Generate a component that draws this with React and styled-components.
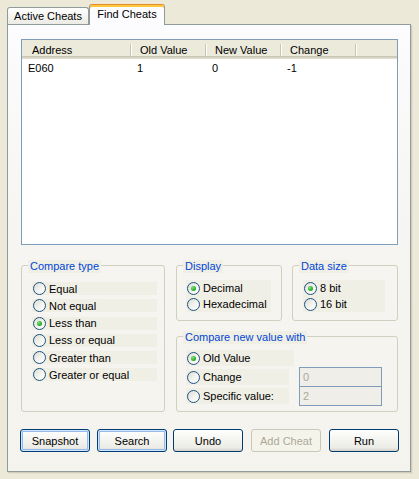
import { createGlobalStyle, styled, css } from "styled-components";

const GlobalStyle = createGlobalStyle`
  html, body {
    margin: 0;
    padding: 0;
    background: #ece9d8;
  }
  body {
    font-family: "Liberation Sans", Arial, sans-serif;
    font-size: 11px;
    color: #000000;
  }
`;

const Window = styled.div`
  width: 419px;
  height: 479px;
  box-sizing: border-box;
  padding: 4px 8px 0 7px;
  background: #ece9d8;
  overflow: hidden;
`;

const TabStrip = styled.div`
  display: flex;
  align-items: flex-end;
  height: 20px;
`;

const Tab = styled.div`
  box-sizing: border-box;
  display: flex;
  align-items: center;
  justify-content: center;
  border: 1px solid #919b9c;
  border-bottom: none;
  border-radius: 3px 3px 0 0;
  ${(p) =>
    p.$active
      ? css`
          width: 76px;
          height: 21px;
          margin-bottom: -1px;
          position: relative;
          z-index: 1;
          padding-bottom: 2px;
          border-top: 1px solid #e68b2c;
          box-shadow: inset 0 2px 0 #ffc73c;
          background: #fcfcfe;
        `
      : css`
          width: 82px;
          height: 17px;
          background: linear-gradient(#ffffff, #f3f3ef 60%, #ecebe5);
        `}
`;

const Panel = styled.div`
  box-sizing: border-box;
  width: 404px;
  height: 448px;
  border: 1px solid #919b9c;
  padding: 14px 0 0 13px;
  background: linear-gradient(#fcfcfe, #f6f5f1 45%, #f4f3ee);
  box-shadow: 1px 1px 0 #d0cebf, 2px 2px 0 #e3e0d0;
`;

const List = styled.div`
  box-sizing: border-box;
  width: 377px;
  height: 206px;
  border: 1px solid #7f9db9;
  background: #ffffff;
`;

const HeaderRow = styled.div`
  display: flex;
  align-items: flex-start;
  height: 19px;
  box-sizing: border-box;
  background: #ebeadb;
  box-shadow: inset 0 -1px 0 #e2decd, inset 0 -2px 0 #d6d2c2, inset 0 -3px 0 #cbc7b8;
`;

const HeaderCell = styled.div`
  box-sizing: border-box;
  width: ${(p) => p.$w}px;
  height: 12px;
  margin-top: 4px;
  line-height: 12px;
  padding-left: ${(p) => p.$pad || 9}px;
  border-right: 1px solid #c7c5b2;
  box-shadow: 1px 0 0 #ffffff;
`;

const DataRow = styled.div`
  display: flex;
  height: 17px;
  align-items: center;
`;

const DataCell = styled.div`
  box-sizing: border-box;
  width: ${(p) => p.$w}px;
  padding-left: 6px;
`;

const Groups = styled.div`
  display: grid;
  grid-template-columns: 144px 222px;
  column-gap: 11px;
  margin-top: 20px;
`;

const RightColumn = styled.div`
  display: flex;
  flex-direction: column;
  gap: 15px;
`;

const TopPair = styled.div`
  display: flex;
  gap: 10px;
`;

const GroupBox = styled.div`
  position: relative;
  box-sizing: border-box;
  width: ${(p) => p.$w}px;
  height: ${(p) => p.$h}px;
  border: 1px solid #d0d0bf;
  border-radius: 3px;
  padding: ${(p) => p.$pad};
`;

const Legend = styled.span`
  position: absolute;
  top: -6px;
  left: 6px;
  height: 13px;
  line-height: 13px;
  padding: 0 2px;
  color: #0046d5;
  background: #f0efe6;
`;

const RadioList = styled.div`
  display: flex;
  flex-direction: column;
  gap: ${(p) => p.$gap}px;
`;

const RadioRow = styled.div`
  box-sizing: border-box;
  display: flex;
  align-items: center;
  gap: 3px;
  width: ${(p) => p.$w}px;
  height: ${(p) => p.$h}px;
  padding-left: 1px;
  background: #f0efe6;
  white-space: nowrap;
`;

const RadioDot = styled.span`
  position: relative;
  flex: none;
  box-sizing: border-box;
  width: 13px;
  height: 13px;
  border-radius: 50%;
  border: 1px solid #1c5180;
  background: linear-gradient(135deg, #dcdcd4 0%, #f2f2ee 50%, #ffffff 100%);

  ${(p) =>
    p.$checked &&
    css`
      &::after {
        content: "";
        position: absolute;
        left: 3px;
        top: 3px;
        width: 5px;
        height: 5px;
        border-radius: 50%;
        background: radial-gradient(circle at 35% 35%, #7ee07a 0%, #2fb22b 55%, #1b8d18 100%);
      }
    `}
`;

const CompareGrid = styled.div`
  display: grid;
  grid-template-columns: 103px 83px;
  grid-auto-rows: 16px;
  column-gap: 10px;
  row-gap: 3px;
`;

const ValueInput = styled.div`
  box-sizing: border-box;
  height: 20px;
  margin-top: -2px;
  border: 1px solid #7f9db9;
  background: #efeee8;
  color: #aca899;
  padding-left: 3px;
  line-height: 18px;
`;

const ButtonRow = styled.div`
  display: flex;
  margin-top: 17px;
  margin-left: -1px;
`;

const Button = styled.button`
  box-sizing: border-box;
  width: 70px;
  height: 23px;
  margin-left: ${(p) => p.$gap || 0}px;
  padding: 0;
  font-family: inherit;
  font-size: 11px;
  font-weight: normal;
  color: #000000;
  border: 1px solid #003c74;
  border-radius: 3px;
  background: linear-gradient(#ffffff 0%, #f3f3ef 50%, #ecebe6 85%, #d6d0c5 100%);
  ${(p) =>
    p.$focus &&
    css`
      box-shadow: inset 0 0 0 1px #cee7ff, inset 0 0 0 2px #98b8ea;
    `}
  ${(p) =>
    p.disabled &&
    css`
      color: #aca899;
      border-color: #c9c7ba;
      background: #f5f4ea;
    `}
`;

const Radio = ({ label, checked, w, h }) => (
  <RadioRow $w={w} $h={h}>
    <RadioDot $checked={checked} />
    <span>{label}</span>
  </RadioRow>
);

const columns = [
  { name: "Address", w: 109, pad: 10 },
  { name: "Old Value", w: 75 },
  { name: "New Value", w: 75 },
  { name: "Change", w: 75 },
];

const compareTypes = [
  "Equal",
  "Not equal",
  "Less than",
  "Less or equal",
  "Greater than",
  "Greater or equal",
];

export default function App() {
  const row = ["E060", "1", "0", "-1"];
  return (
    <>
      <GlobalStyle />
      <Window>
        <TabStrip>
          <Tab>Active Cheats</Tab>
          <Tab $active>Find Cheats</Tab>
        </TabStrip>
        <Panel>
          <List>
            <HeaderRow>
              {columns.map((c) => (
                <HeaderCell key={c.name} $w={c.w} $pad={c.pad}>
                  {c.name}
                </HeaderCell>
              ))}
            </HeaderRow>
            <DataRow>
              {row.map((v, i) => (
                <DataCell key={i} $w={columns[i].w}>
                  {v}
                </DataCell>
              ))}
            </DataRow>
          </List>

          <Groups>
            <GroupBox $w={144} $h={147} $pad="16px 0 0 10px">
              <Legend>Compare type</Legend>
              <RadioList $gap={4.3}>
                {compareTypes.map((t) => (
                  <Radio key={t} label={t} checked={t === "Less than"} w={125} h={13} />
                ))}
              </RadioList>
            </GroupBox>

            <RightColumn>
              <TopPair>
                <GroupBox $w={106} $h={56} $pad="14px 0 0 9px">
                  <Legend>Display</Legend>
                  <RadioList $gap={0}>
                    <Radio label="Decimal" checked w={85} h={16} />
                    <Radio label="Hexadecimal" w={85} h={16} />
                  </RadioList>
                </GroupBox>
                <GroupBox $w={106} $h={56} $pad="14px 0 0 10px">
                  <Legend>Data size</Legend>
                  <RadioList $gap={0}>
                    <Radio label="8 bit" checked w={82} h={16} />
                    <Radio label="16 bit" w={82} h={16} />
                  </RadioList>
                </GroupBox>
              </TopPair>

              <GroupBox $w={222} $h={76} $pad="13px 0 0 9px">
                <Legend>Compare new value with</Legend>
                <CompareGrid>
                  <Radio label="Old Value" checked w={108} h={16} />
                  <span />
                  <Radio label="Change" w={103} h={16} />
                  <ValueInput>0</ValueInput>
                  <Radio label="Specific value:" w={103} h={16} />
                  <ValueInput>2</ValueInput>
                </CompareGrid>
              </GroupBox>
            </RightColumn>
          </Groups>

          <ButtonRow>
            <Button $focus>Snapshot</Button>
            <Button $focus $gap={7}>
              Search
            </Button>
            <Button $gap={6}>Undo</Button>
            <Button disabled $gap={8}>
              Add Cheat
            </Button>
            <Button $gap={8}>Run</Button>
          </ButtonRow>
        </Panel>
      </Window>
    </>
  );
}
